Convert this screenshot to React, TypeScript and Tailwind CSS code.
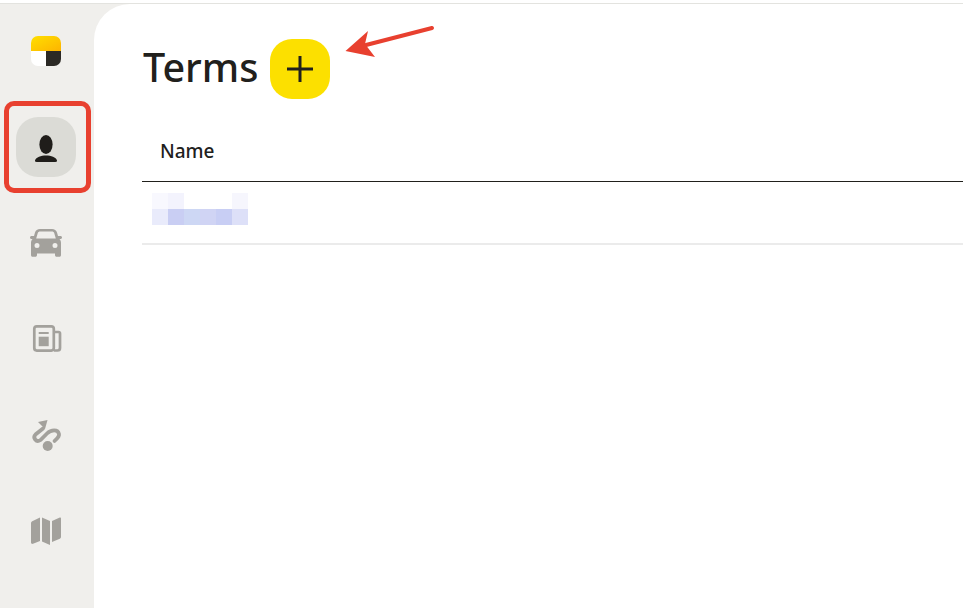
const font = "font-['Noto_Sans','Liberation_Sans',sans-serif]";

function Logo() {
    return (
        <svg width="30" height="30" viewBox="0 0 30 30">
            <defs>
                <linearGradient id="logoYellow" x1="0" y1="0" x2="1" y2="1">
                    <stop offset="0" stopColor="#ffdf00" />
                    <stop offset="1" stopColor="#fdb400" />
                </linearGradient>
                <clipPath id="logoClip">
                    <rect width="30" height="30" rx="7" />
                </clipPath>
            </defs>
            <g clipPath="url(#logoClip)">
                <rect width="30" height="15" fill="url(#logoYellow)" />
                <rect y="15" width="15" height="15" fill="#ffffff" />
                <rect x="15" y="15" width="15" height="15" fill="#2b2925" />
            </g>
        </svg>
    );
}

function PersonIcon() {
    return (
        <svg className="mt-[3px]" width="22" height="27" viewBox="0 0 22 27" fill="#1f1d1a">
            <ellipse cx="11" cy="9.500" rx="6.600" ry="9.500" />
            <path d="M0 25.500C1 22 6 20.500 11 20.500s10 1.500 11 5c.2 1-.5 1.500-1.500 1.500H1.500C.5 27-.2 26.500 0 25.500z" />
        </svg>
    );
}

function CarIcon() {
    return (
        <svg width="32" height="28" viewBox="0 0 32 28" fill="#a3a19c">
            <path
                fillRule="evenodd"
                d="M10 0h12c2.500 0 4.300 1.200 5 3.500l1 3.500h2.500c.8 0 1.500.7 1.500 1.500S31.300 10 30.500 10H29.500c1.200 1.200 1.500 2.500 1.500 4v12c0 1-.6 1.800-1.700 1.800h-2.600c-1 0-1.700-.8-1.700-1.800v-1.500H7V26c0 1-.7 1.800-1.700 1.800H2.700C1.600 27.800 1 27 1 26V14c0-1.500.3-2.800 1.500-4H1.500C.7 10 0 9.300 0 8.500S.7 7 1.500 7H4l1-3.500C5.700 1.200 7.500 0 10 0zm0 2.600c-1 0-1.800.5-2.200 1.500L6.200 9.500h19.600l-1.600-5.400c-.4-1-1.200-1.500-2.200-1.500H10zM7 14a2.500 2.500 0 1 0 0 5 2.500 2.500 0 0 0 0-5zm18 0a2.500 2.500 0 1 0 0 5 2.500 2.500 0 0 0 0-5z"
            />
        </svg>
    );
}

function NewsIcon() {
    return (
        <svg width="40" height="40" viewBox="0 -1 40 40" fill="none" stroke="#a3a19c" strokeWidth="2.700">
            <rect x="8.300" y="6.300" width="19.500" height="24.300" rx="2.500" />
            <path d="M28 12h4.500a1.500 1.500 0 0 1 1.500 1.500V28a2.500 2.500 0 0 1-2.500 2.500H28" />
            <path d="M12.700 13h10" strokeWidth="2" />
            <rect x="12.700" y="16.700" width="10" height="9.500" fill="#a3a19c" stroke="none" />
        </svg>
    );
}

function RouteIcon() {
    return (
        <svg width="40" height="40" viewBox="0 0 40 40" fill="none">
            <path d="M12 7L21.500 5L19 14z" fill="#a3a19c" />
            <path
                d="M17 13.500L9.500 19.500C6.500 22.500 10 28 14.500 25L21 18.500C25 14.500 32 14 33 19C33.500 22 30.500 24 28.500 26"
                stroke="#a3a19c"
                strokeWidth="3.800"
                strokeLinecap="round"
            />
            <circle cx="21.700" cy="31" r="5" fill="#a3a19c" />
        </svg>
    );
}

function MapIcon() {
    return (
        <svg width="30" height="28" viewBox="0 0 30 28" fill="#a3a19c">
            <path d="M9 .5v23.500l-7 2.800c-1 .4-2-.2-2-1.300V6c0-.8.4-1.400 1.200-1.800z" />
            <path d="M11 .5l8 3.500v24l-8-3.500z" />
            <path d="M21 4l7.800-3.500c.6-.2 1.200.2 1.200 1v18.500c0 .8-.4 1.400-1.200 1.800L21 25z" />
        </svg>
    );
}

function Sidebar() {
    const items = [<CarIcon />, <NewsIcon />, <RouteIcon />, <MapIcon />];

    return (
        <aside className="w-[94px] shrink-0 pl-4">
            <div className="w-[60px] h-[95px] pb-px flex items-center justify-center">
                <Logo />
            </div>
            <div className="w-[60px] h-24 flex items-center justify-center">
                <div className="w-[60px] h-[60px] rounded-[22px] bg-[#dbdbd6] flex items-center justify-center">
                    <PersonIcon />
                </div>
            </div>
            {items.map((icon, i) => (
                <div key={i} className="w-[60px] h-24 flex items-center justify-center">
                    {icon}
                </div>
            ))}
        </aside>
    );
}

const topBlocks = ["bg-[#f8f8fe]", "bg-[#f3f3fd]", "bg-white", "bg-white", "bg-white", "bg-[#f6f6fd]"];
const bottomBlocks = ["bg-[#e9ebfb]", "bg-[#c9cef3]", "bg-[#cdd7f4]", "bg-[#d0d4f4]", "bg-[#c8cef4]", "bg-[#dde0f8]"];

function BlurredName() {
    return (
        <div className="w-24">
            <div className="flex">
                {topBlocks.map((c, i) => (
                    <div key={i} className={`w-4 h-4 ${c}`}></div>
                ))}
            </div>
            <div className="flex">
                {bottomBlocks.map((c, i) => (
                    <div key={i} className={`w-4 h-4 ${c}`}></div>
                ))}
            </div>
        </div>
    );
}

export default function App() {
    return (
        <div className={`relative w-[963px] h-[608px] overflow-hidden bg-white pt-[3px] ${font}`}>
            <div className="h-[605px] bg-[#f0efec] border-t border-[#e3e3df] flex">
                <Sidebar />

                <main className="flex-1 bg-white rounded-tl-[36px] pl-12 pt-[35px]">
                    {/* Header */}
                    <div className="flex items-center gap-3 h-[60px]">
                        <h1 className="w-[116px] pl-px pb-[3px] text-[39.500px] leading-none font-medium text-[#21201c] whitespace-nowrap">Terms</h1>
                        <button className="w-[60px] h-[60px] rounded-[22px] bg-[#fce000] flex items-center justify-center">
                            <svg width="28" height="28" viewBox="0 0 28 28" stroke="#21201c" strokeWidth="3">
                                <path d="M14 1v26M1 14h26" />
                            </svg>
                        </button>
                    </div>

                    {/* Table */}
                    <div className="mt-[22px] h-[61px] border-b border-[#21201c] pl-[18px] flex items-center">
                        <span className="text-[19px] font-medium text-[#21201c]">Name</span>
                    </div>
                    <div className="h-[63px] border-b-2 border-[#ebebeb] pl-2.5 pt-[11px]">
                        <BlurredName />
                    </div>
                </main>
            </div>

            {/* Annotations */}
            <div className="absolute left-1 top-[101px] w-[87px] h-[92px] border-[5px] border-[#e8402f] rounded-[10px]"></div>
            <svg className="absolute left-[340px] top-[20px]" width="100" height="40" viewBox="0 0 100 40">
                <path d="M92 8L26 25" stroke="#e8402f" strokeWidth="4" strokeLinecap="round" />
                <path d="M5.500 31L28 11l-3 13 10 13z" fill="#e8402f" />
            </svg>
        </div>
    );
}
